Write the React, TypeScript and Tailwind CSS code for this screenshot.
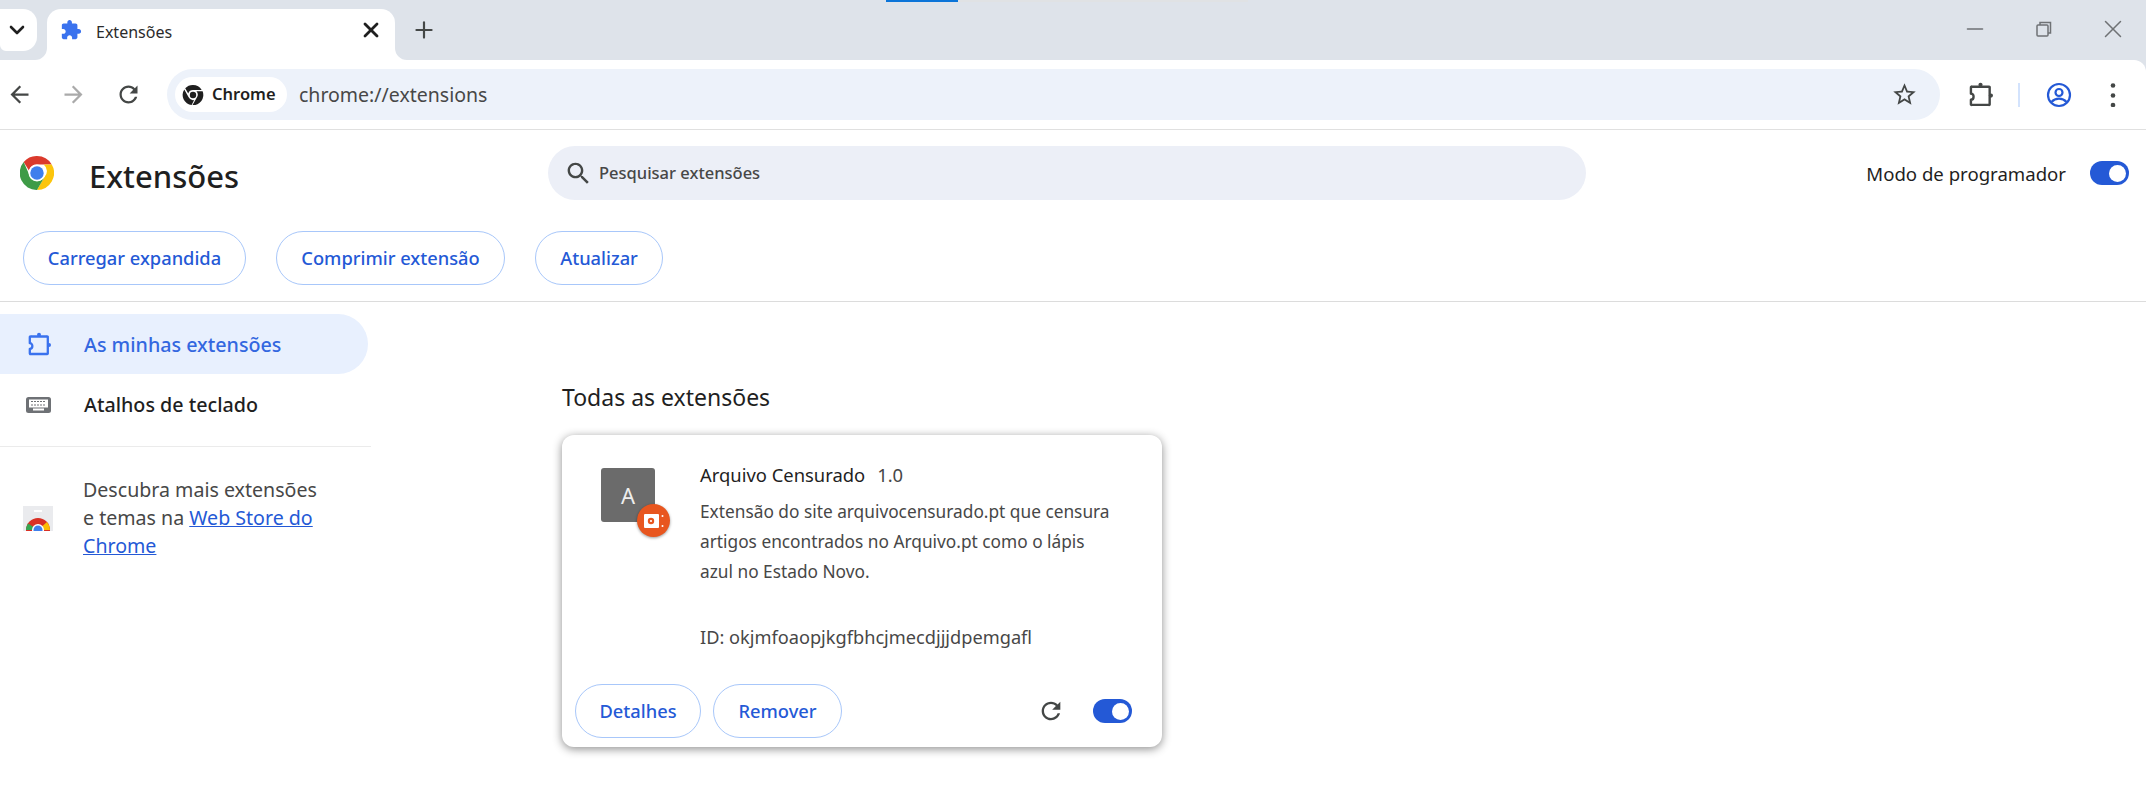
import { ChevronDown, Minus, Plus, X } from "lucide-react";

const RELOAD_PATH =
  "M17.650 6.350C16.200 4.900 14.210 4 12 4c-4.420 0-7.990 3.580-7.990 8s3.570 8 7.990 8c3.730 0 6.840-2.550 7.730-6h-2.080c-.82 2.330-3.040 4-5.650 4-3.310 0-6-2.690-6-6s2.690-6 6-6c1.660 0 3.140.69 4.220 1.780L13 11h7V4l-2.350 2.350z";

function Glyph({ size, path, className }: { size: number; path: string; className: string }) {
  return (
    <svg width={size} height={size} viewBox="0 0 24 24" fill="currentColor" className={className}>
      <path d={path} />
    </svg>
  );
}

function ExtensionOutline({ size, className }: { size: number; className: string }) {
  return (
    <svg width={size} height={size} viewBox="0 0 24 24" fill="none" stroke="currentColor" strokeWidth="2.300" className={className}>
      <path d="M4 4.500h16a.6.6 0 0 1 .8.8v16a.6.6 0 0 1-.8.7H3.500a.6.6 0 0 1-.7-.7v-4.300c3.400 0 3.400-5.800 0-5.800V5.300a.8.8 0 0 1 1.200-.8z" strokeLinejoin="round" />
      <circle cx="12" cy="2.700" r="2" fill="currentColor" stroke="none" />
      <circle cx="22" cy="13" r="2" fill="currentColor" stroke="none" />
    </svg>
  );
}

function ChromeLogo({ size }: { size: number }) {
  return (
    <svg width={size} height={size} viewBox="0 0 48 48">
      <circle cx="24" cy="24" r="24" fill="#fff" />
      <path d="M24 0a24 24 0 0 1 20.800 12H24a12 12 0 0 0-11.400 8.300L5.200 8.600A24 24 0 0 1 24 0z" fill="#db3a2c" />
      <path d="M44.800 12A24 24 0 0 1 24 48l10.400-18a12 12 0 0 0-1-18z" fill="#fcc50c" />
      <path d="M24 48A24 24 0 0 1 5.200 8.600l9.400 21.400A12 12 0 0 0 34.400 30L24 48z" fill="#3e9b47" />
      <circle cx="24" cy="24" r="12" fill="#fff" />
      <circle cx="24" cy="24" r="9.500" fill="#3f7fec" />
    </svg>
  );
}

function ChromeMono() {
  return (
    <svg width="22" height="22" viewBox="0 0 48 48" className="text-[#1f1f1f]">
      <path d="M24 2a22 22 0 0 1 19 11H24a11 11 0 0 0-10.400 7.500L7 9.500A22 22 0 0 1 24 2z" fill="currentColor" />
      <path d="M45 16a22 22 0 0 1-22 30l10-17.500a11 11 0 0 0-1.500-12.500z" fill="currentColor" />
      <path d="M21 46A22 22 0 0 1 5 12l9.500 17a11 11 0 0 0 12 6l-5.500 11z" fill="currentColor" />
      <circle cx="24" cy="24" r="7" fill="currentColor" />
    </svg>
  );
}

function WebStoreIcon() {
  return (
    <svg width="30" height="25" viewBox="0 0 30 25" className="shrink-0">
      <rect width="30" height="25" fill="#eaebee" />
      <rect x="11" y="4" width="8" height="2" fill="#fff" />
      <circle cx="15" cy="24" r="12" fill="#d93025" />
      <path d="M15 24h12a12 12 0 0 0-3-8z" fill="#fbbc04" />
      <path d="M15 24H3a12 12 0 0 1 2-6.500z" fill="#34a853" />
      <circle cx="15" cy="24" r="6" fill="#fff" />
      <circle cx="15" cy="24" r="4.500" fill="#3f7fec" />
    </svg>
  );
}

function Toggle() {
  return (
    <div className="flex h-6 w-[39px] items-center justify-end rounded-full bg-[#2459d6] pr-[3px]">
      <div className="size-[17px] rounded-full bg-white" />
    </div>
  );
}

function OutlineButton({ label, width }: { label: string; width: string }) {
  return (
    <button className={`flex h-[54px] items-center justify-center rounded-full border border-[#a8c7fa] text-[18.3px] font-medium text-[#2459d6] ${width}`}>
      {label}
    </button>
  );
}

function TabStrip() {
  return (
    <div className="relative h-[58px]">
      <div className="flex h-full items-end">
        <div className="mb-[9px] flex h-[42px] w-[37px] items-center justify-center rounded-r-[14px] rounded-bl-[6px] bg-white pr-[3px]">
          <ChevronDown size={24} strokeWidth={2.6} className="text-[#1f1f1f]" />
        </div>
        <div className="relative ml-[10px] flex h-[51px] w-[348px] items-center rounded-t-[14px] bg-white pl-[13px] pr-[12px]">
          <svg width="12" height="12" viewBox="0 0 12 12" fill="#fff" className="absolute bottom-0 -left-[12px]">
            <path d="M12 0v12H0a12 12 0 0 0 12-12z" />
          </svg>
          <svg width="12" height="12" viewBox="0 0 12 12" fill="#fff" className="absolute bottom-0 -right-[12px]">
            <path d="M0 0v12h12A12 12 0 0 1 0 0z" />
          </svg>
          <svg width="22" height="22" viewBox="0 0 24 24" fill="#3a72ee" className="mb-[9px] shrink-0">
            <path d="M20.500 11H19V7c0-1.100-.9-2-2-2h-4V3.500C13 2.120 11.880 1 10.500 1S8 2.120 8 3.500V5H4c-1.100 0-1.990.9-1.990 2v3.800H3.500c1.490 0 2.700 1.210 2.700 2.700s-1.210 2.700-2.700 2.700H2V20c0 1.100.9 2 2 2h3.800v-1.500c0-1.490 1.210-2.700 2.700-2.700 1.490 0 2.700 1.210 2.700 2.700V22H17c1.100 0 2-.9 2-2v-4h1.500c1.380 0 2.500-1.120 2.500-2.500S21.880 11 20.500 11z" />
          </svg>
          <span className="mb-[5px] ml-[14px] text-[16px] text-[#2b2b2b]">Extensões</span>
          <X size={24} strokeWidth={2.8} className="mb-[9px] ml-auto text-[#1f1f1f]" />
        </div>
        <Plus size={26} strokeWidth={2} className="mb-[17px] ml-[16px] text-[#444746]" />
        <div className="-mr-px ml-auto flex h-full items-center pb-[4px] text-[#6f7275]">
          <div className="flex w-[69px] justify-center">
            <Minus size={26} strokeWidth={1.3} />
          </div>
          <div className="flex w-[69px] justify-center">
            <svg width="16" height="16" viewBox="0 0 16 16" fill="none" stroke="currentColor" strokeWidth="1.500">
              <rect x="1" y="4" width="11" height="11" rx="1" />
              <path d="M4 4V1.500h10.500V12H12" />
            </svg>
          </div>
          <div className="flex w-[69px] justify-center">
            <X size={30} strokeWidth={1.2} />
          </div>
        </div>
      </div>
    </div>
  );
}

function Toolbar() {
  return (
    <div className="flex h-[70px] items-center rounded-tr-[12px] border-b border-[#e0e0e0] bg-white">
      <Glyph size={27} path="M20 11H7.830l5.590-5.590L12 4l-8 8 8 8 1.410-1.410L7.830 13H20v-2z" className="ml-[6px] text-[#444746]" />
      <Glyph size={27} path="M12 4l-1.410 1.410L16.170 11H4v2h12.170l-5.580 5.590L12 20l8-8z" className="ml-[27px] text-[#aaaaaa]" />
      <Glyph size={27} path={RELOAD_PATH} className="ml-[28px] text-[#444746]" />
      <div className="ml-[25px] flex h-[51px] w-[1773px] items-center rounded-full bg-[#edf2fa] pl-2 pr-[22px]">
        <div className="flex h-[35px] w-[112px] items-center gap-[8px] rounded-full bg-white pl-[7px]">
          <ChromeMono />
          <span className="text-[16.500px] font-semibold text-[#1f1f1f]">Chrome</span>
        </div>
        <span className="ml-[12px] text-[19.500px] text-[#474747]">chrome://extensions</span>
        <Glyph
          size={27}
          path="M22 9.240l-7.190-.62L12 2 9.190 8.630 2 9.240l5.460 4.730L5.820 21 12 17.270 18.180 21l-1.630-7.030L22 9.240zM12 15.400l-3.760 2.270 1-4.280-3.320-2.880 4.380-.38L12 6.100l1.710 4.040 4.380.38-3.320 2.880 1 4.280L12 15.400z"
          className="ml-auto text-[#444746]"
        />
      </div>
      <ExtensionOutline size={25} className="ml-[28px] text-[#444746]" />
      <div className="ml-[25px] h-[24px] w-[2px] bg-[#d3e3fd]" />
      <svg width="26" height="26" viewBox="0 0 26 26" fill="none" stroke="#2459d6" strokeWidth="2.200" className="ml-[26px]">
        <circle cx="13" cy="13" r="11" />
        <circle cx="13" cy="10.500" r="3.500" />
        <path d="M5.500 20c4-4.500 11-4.500 15 0" />
      </svg>
      <svg width="24" height="24" viewBox="0 0 24 24" fill="#444746" className="ml-[29px]">
        <circle cx="12" cy="2.500" r="2.300" />
        <circle cx="12" cy="12.500" r="2.300" />
        <circle cx="12" cy="22" r="2.300" />
      </svg>
    </div>
  );
}

function PageHeader() {
  return (
    <div className="h-[172px] border-b border-[#dcdcdc] bg-white">
      <div className="flex h-[71px] items-end">
        <div className="mb-[11px] ml-[20px]">
          <ChromeLogo size={34} />
        </div>
        <h1 className="mb-[5px] ml-[35px] w-[149px] shrink-0 text-[31px] font-medium leading-[40px] whitespace-nowrap text-[#1f1f1f]">Extensões</h1>
        <div className="mb-px ml-[310px] flex h-[54px] w-[1038px] items-center rounded-full bg-[#eceff7] pl-[16px]">
          <Glyph
            size={29}
            path="M15.500 14h-.79l-.28-.27C15.410 12.590 16 11.110 16 9.500 16 5.910 13.090 3 9.500 3S3 5.910 3 9.500 5.910 16 9.500 16c1.610 0 3.090-.59 4.230-1.570l.27.28v.79l5 4.990L20.490 19l-4.990-5zm-6 0C7.010 14 5 11.990 5 9.500S7.010 5 9.500 5 14 7.010 14 9.500 11.990 14 9.500 14z"
            className="text-[#444746]"
          />
          <span className="ml-[6px] text-[16.500px] font-medium text-[#474747]">Pesquisar extensões</span>
        </div>
        <span className="mb-[13px] ml-auto text-[18.600px] text-[#1f1f1f]">Modo de programador</span>
        <div className="mb-[16px] ml-[24px] mr-[17px]">
          <Toggle />
        </div>
      </div>
      <div className="ml-[23px] mt-[30px] flex gap-[30px]">
        <OutlineButton label="Carregar expandida" width="w-[223px]" />
        <OutlineButton label="Comprimir extensão" width="w-[229px]" />
        <OutlineButton label="Atualizar" width="w-[128px]" />
      </div>
    </div>
  );
}

function Sidebar() {
  return (
    <aside className="w-[371px] shrink-0 pt-[12px]">
      <div className="flex h-[60px] w-[368px] items-center rounded-r-full bg-[#e8f0fe] pl-[27px] text-[#3367e0]">
        <ExtensionOutline size={24} className="text-[#3a72ee]" />
        <span className="ml-[33px] pt-px text-[19.700px] font-medium">As minhas extensões</span>
      </div>
      <div className="flex h-[61px] items-center pl-[26px]">
        <svg width="25" height="16" viewBox="0 0 25 16">
          <rect width="25" height="16" rx="2.500" fill="#6e7175" />
          <rect x="3" y="2.500" width="19" height="8" fill="#fff" />
          <path d="M5 4.500h15M5 8h15" stroke="#6e7175" strokeWidth="1.200" strokeDasharray="2 1" />
          <rect x="7" y="11.500" width="11" height="2" fill="#fff" />
        </svg>
        <span className="ml-[33px] text-[19.700px] font-medium text-[#1f1f1f]">Atalhos de teclado</span>
      </div>
      <div className="mt-[11px] h-px bg-[#ebebeb]" />
      <div className="mt-[29px] flex items-center pl-[23px]">
        <WebStoreIcon />
        <p className="ml-[30px] w-[250px] text-[19.600px] leading-[28px] text-[#474747]">
          Descubra mais extensões
          <br />e temas na <a className="text-[#2459d6] underline">Web Store do</a>
          <br />
          <a className="text-[#2459d6] underline">Chrome</a>
        </p>
      </div>
    </aside>
  );
}

function ExtensionCard() {
  return (
    <div className="h-[312px] w-[600px] rounded-[12px] bg-white shadow-[0_2px_10px_rgba(0,0,0,0.45)]">
      <div className="flex h-[249px] pl-[39px] pt-[33px]">
        <div className="relative flex size-[54px] shrink-0 items-center justify-center rounded-[3px] bg-[#6b6b6b] text-[22px] text-[#eeeeee]">
          A
          <div className="absolute -bottom-[15px] -right-[15px] flex size-[33px] items-center justify-center rounded-full bg-[#e8561f] shadow-[0_1px_3px_rgba(0,0,0,0.4)]">
            <svg width="20" height="14" viewBox="0 0 20 14">
              <rect width="15" height="14" fill="#fff" rx="1" />
              <circle cx="7" cy="7" r="3.200" fill="#e8561f" />
              <circle cx="7" cy="7" r="1.100" fill="#fff" />
              <circle cx="18.500" cy="2" r="1" fill="#fff" />
              <circle cx="18.500" cy="12" r="1" fill="#fff" />
            </svg>
          </div>
        </div>
        <div className="-mt-[8px] ml-[45px] w-[450px]">
          <div className="flex gap-[12px] text-[18.400px] leading-[30px] text-[#1f1f1f]">
            <span>Arquivo Censurado</span>
            <span className="text-[#474747]">1.0</span>
          </div>
          <p className="mt-[7px] text-[17.300px] leading-[30px] text-[#474747]">
            Extensão do site arquivocensurado.pt que censura
            <br />
            artigos encontrados no Arquivo.pt como o lápis
            <br />
            azul no Estado Novo.
          </p>
          <p className="mt-[35px] text-[18.200px] leading-[30px] text-[#474747]">ID: okjmfoaopjkgfbhcjmecdjjjdpemgafl</p>
        </div>
      </div>
      <div className="flex items-center pl-[13px] pr-[30px]">
        <div className="flex gap-[12px]">
          <OutlineButton label="Detalhes" width="w-[126px]" />
          <OutlineButton label="Remover" width="w-[129px]" />
        </div>
        <Glyph size={28} path={RELOAD_PATH} className="ml-auto text-[#444746]" />
        <div className="ml-[28px]">
          <Toggle />
        </div>
      </div>
    </div>
  );
}

export default function App() {
  return (
    <div className="flex h-[795px] flex-col overflow-hidden bg-[#dee3ea] font-['Noto_Sans',sans-serif]">
      <div className="flex h-[2px] pl-[886px]">
        <div className="w-[72px] bg-[#0b74d8]" />
        <div className="w-[290px] bg-[#e0e2e4]" />
      </div>
      <TabStrip />
      <Toolbar />
      <PageHeader />
      <div className="flex flex-1 bg-white">
        <Sidebar />
        <main className="ml-[191px] pt-[78px]">
          <h2 className="text-[23px] leading-[34px] text-[#1f1f1f]">Todas as extensões</h2>
          <div className="mt-[21px]">
            <ExtensionCard />
          </div>
        </main>
      </div>
    </div>
  );
}
